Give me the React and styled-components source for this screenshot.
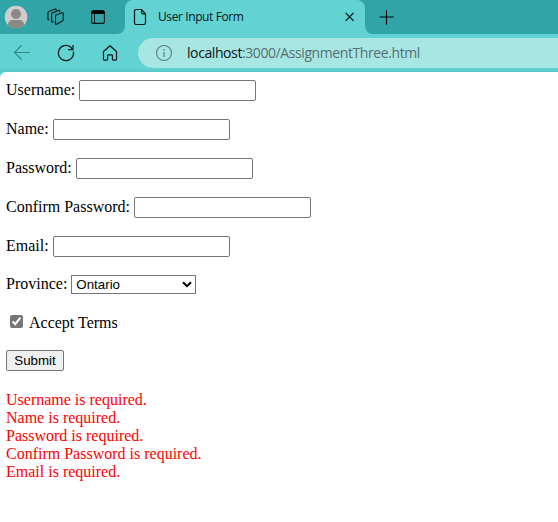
import React, { useState } from "react";
import styled, { createGlobalStyle } from "styled-components";

const GlobalStyle = createGlobalStyle`
  * { box-sizing: border-box; }
  body { margin: 0; background: #fff; overflow: hidden; }
`;

const Browser = styled.div`
  display: flex;
  flex-direction: column;
  height: 522px;
  overflow: hidden;
  background: #62d2d2;
`;

const TabStrip = styled.div`
  display: flex;
  height: 34px;
  flex: none;
  background: #62d2d2;
`;

const StripSection = styled.div`
  display: flex;
  align-items: center;
  background: #31a4a8;
  height: 34px;
`;

const StartSection = styled(StripSection)`
  width: 125px;
  padding-left: 4px;
  border-bottom-right-radius: 8px;
  svg { flex: none; }
`;

const EndSection = styled(StripSection)`
  flex: 1;
  padding-left: 14px;
  border-bottom-left-radius: 8px;
`;

const TabFrame = styled.div`
  width: 240px;
  /* only the upper half shows the strip colour behind the rounded corners */
  background: linear-gradient(#31a4a8 17px, #62d2d2 17px);
`;

const Tab = styled.div`
  display: flex;
  align-items: center;
  height: 34px;
  padding: 0 9px 0 8px;
  background: #62d2d2;
  border-radius: 8px 8px 0 0;
`;

const TabTitle = styled.span`
  flex: 1;
  margin-left: 10px;
  font: 12px/16px "Open Sans", "Noto Sans", sans-serif;
  letter-spacing: -0.4px;
  color: #06191a;
  white-space: nowrap;
`;

const Toolbar = styled.div`
  display: flex;
  align-items: center;
  height: 38px;
  flex: none;
  padding-left: 12px;
  background: linear-gradient(#62d2d2 34px, #59c7c8 38px);
`;

const NavIcons = styled.div`
  display: flex;
  align-items: center;
  gap: 24px;
  width: 126px;
  svg { flex: none; }
`;

const AddressBar = styled.div`
  display: flex;
  align-items: center;
  flex: 1;
  height: 30px;
  padding-left: 17px;
  background: #a8e6e4;
  border-radius: 15px 0 0 15px;
`;

const Url = styled.span`
  margin-left: 14px;
  font: 14px/20px "Open Sans", "Noto Sans", sans-serif;
  letter-spacing: -0.41px;
  color: #576f70;
  white-space: nowrap;
`;

const Host = styled.span`
  color: #061718;
`;

const Page = styled.main`
  flex: 1;
  padding: 8px 6px;
  background: #fff;
  border-top-left-radius: 6px;
  font: 16px/17px "Liberation Serif", "Times New Roman", serif;
  color: #000;
`;

const Field = styled.label`
  display: flex;
  align-items: baseline;
  gap: 4px;
  height: 21px;
  margin-bottom: 18px;
  white-space: nowrap;
`;

const SelectField = styled(Field)`
  height: 19px;
`;

const TextInput = styled.input`
  width: 177px;
  height: 21px;
  margin: 0;
  padding: 1px 2px;
  border: 1px solid #767676;
  border-radius: 2px;
  background: #fff;
  font: 13.333px "Liberation Sans", Arial, sans-serif;
  outline: none;
`;

const SelectWrap = styled.span`
  display: grid;
  width: 125px;
  height: 19px;
  & > * { grid-area: 1 / 1; }
  svg { justify-self: end; align-self: center; margin-right: 4px; pointer-events: none; }
`;

const Select = styled.select`
  appearance: none;
  width: 125px;
  height: 19px;
  margin: 0;
  padding: 0 4px;
  border: 1px solid #767676;
  border-radius: 0;
  background: #fff;
  color: #000;
  font: 13.333px/17px "Liberation Sans", Arial, sans-serif;
`;

const Terms = styled.label`
  display: flex;
  align-items: baseline;
  gap: 6px;
  height: 18px;
  margin: 20px 0 18px 4px;
`;

const Checkbox = styled.input`
  width: 13px;
  height: 13px;
  margin: 0;
  accent-color: #767676;
`;

const Submit = styled.button`
  display: block;
  width: 58px;
  height: 21px;
  padding: 0;
  border: 1px solid #767676;
  border-radius: 2px;
  background: #efefef;
  color: #000;
  font: 13.333px/17px "Liberation Sans", Arial, sans-serif;
`;

const Errors = styled.div`
  display: grid;
  row-gap: 1px;
  margin-top: 20px;
  color: #f00;
`;

const AvatarIcon = () => (
  <svg width="24" height="24" viewBox="0 0 24 24">
    <circle cx="12" cy="12" r="11.3" fill="#cfcdcb" />
    <circle cx="12" cy="9" r="5" fill="#8b8884" />
    <path d="M4 20c0-3.5 2-5 5-5h6c3 0 5 1.5 5 5a11.3 11.3 0 0 1-16 0Z" fill="#8b8884" />
  </svg>
);

const WorkspacesIcon = styled(({ className }) => (
  <svg className={className} width="18" height="18" viewBox="0 0 18 18" fill="none" stroke="#06191a" strokeWidth="1.1" strokeLinejoin="round" strokeLinecap="round">
    <path d="M8.5 7.2 15 4.8q1.2-.4 1.2.8v6.2q0 .9-.8 1.2l-5.8 3.2q-1.1.5-1.1-.7Z" />
    <path d="M12.7 3.6V2.9q0-.9-1-.6L5.4 4.9q-.8.3-.8 1.2v7q0 1.1 1 .9l.8-.3" />
    <path d="M9.1 1.9V1.6q0-.9-1-.6L1.8 3.4Q1 3.7 1 4.6v6.3q0 1 .9.9" />
  </svg>
))`margin-left: 19px;`;

const TabActionsIcon = styled(({ className }) => (
  <svg className={className} width="14" height="14" viewBox="0 0 14 14">
    <rect x=".6" y=".6" width="12.8" height="12.8" rx="2" fill="none" stroke="#06191a" strokeWidth="1.1" />
    <path d="M.5 4V2.5Q.5.5 2.5.5h9q2 0 2 2V4Z" fill="#000" />
    <path d="M3.5 4v9" stroke="#06191a" strokeWidth="1" />
  </svg>
))`margin-left: 26px;`;

const FileIcon = () => (
  <svg width="15" height="18" viewBox="0 0 15 18" fill="none" stroke="#06191a" strokeWidth="1.2" strokeLinejoin="round">
    <path d="M3 1.5h5.5l4 4.3v9q0 1.7-1.7 1.7H3q-1.5 0-1.5-1.7V3.2Q1.5 1.5 3 1.5ZM8.5 1.5v3q0 1.3 1.3 1.3h2.7" />
  </svg>
);

const CloseIcon = () => (
  <svg width="12" height="12" viewBox="0 0 12 12" stroke="#06191a" strokeWidth="1.3">
    <path d="m1.6 1.9 8 8M9.6 1.9l-8 8" />
  </svg>
);

const PlusIcon = () => (
  <svg width="15" height="15" viewBox="0 0 15 15" stroke="#000" strokeWidth="1.1">
    <path d="M7.5.5v14M.5 7h14" />
  </svg>
);

const BackIcon = () => (
  <svg width="20" height="18" viewBox="0 0 20 18" fill="none" stroke="#34888a" strokeWidth="1.1">
    <path d="M18 8.5H2.5M9.5 1.5l-7 7 7 7" />
  </svg>
);

const ReloadIcon = () => (
  <svg width="20" height="20" viewBox="0 0 20 20" fill="none" stroke="#06191a" strokeWidth="1.2">
    <path d="M17.4 8.5A7.6 7.6 0 1 1 14.6 4l2 2.4M17 2v4.7h-4.8" />
  </svg>
);

const HomeIcon = () => (
  <svg width="20" height="20" viewBox="0 0 20 20" fill="none" stroke="#06191a" strokeWidth="1.2" strokeLinejoin="round">
    <path d="M3.5 8.5 10 2.7l6.5 5.8v7.8q0 .8-.8.8h-2.5q-.8 0-.8-.8v-3.8q0-.7-.7-.7H8.3q-.7 0-.7.7v3.8q0 .8-.8.8H4.3q-.8 0-.8-.8Z" />
  </svg>
);

const InfoIcon = () => (
  <svg width="18" height="18" viewBox="0 0 18 18" fill="none" stroke="#607e7f" strokeWidth="1.1">
    <circle cx="9" cy="9" r="7.5" />
    <path d="M9 8v5M9 5v1.5" strokeWidth="1.3" />
  </svg>
);

const ChevronIcon = () => (
  <svg width="10" height="7" viewBox="0 0 10 7" fill="none" stroke="#000" strokeWidth="2">
    <path d="m1 1.2 4 4 4-4" />
  </svg>
);

const fields = [
  { label: "Username", type: "text" },
  { label: "Name", type: "text" },
  { label: "Password", type: "password" },
  { label: "Confirm Password", type: "password" },
  { label: "Email", type: "text" },
];

export default function App() {
  const [accepted, setAccepted] = useState(true);
  return (
    <Browser>
      <GlobalStyle />
      <TabStrip>
        <StartSection>
          <AvatarIcon />
          <WorkspacesIcon />
          <TabActionsIcon />
        </StartSection>
        <TabFrame>
          <Tab>
            <FileIcon />
            <TabTitle>User Input Form</TabTitle>
            <CloseIcon />
          </Tab>
        </TabFrame>
        <EndSection>
          <PlusIcon />
        </EndSection>
      </TabStrip>
      <Toolbar>
        <NavIcons>
          <BackIcon />
          <ReloadIcon />
          <HomeIcon />
        </NavIcons>
        <AddressBar>
          <InfoIcon />
          <Url><Host>localhost</Host>:3000/AssignmentThree.html</Url>
        </AddressBar>
      </Toolbar>
      <Page>
        {fields.map(({ label, type }) => (
          <Field key={label}>
            {label}:
            <TextInput type={type} />
          </Field>
        ))}
        <SelectField>
          Province:
          <SelectWrap>
            <Select defaultValue="Ontario">
              <option>Ontario</option>
            </Select>
            <ChevronIcon />
          </SelectWrap>
        </SelectField>
        <Terms>
          <Checkbox type="checkbox" checked={accepted} onChange={(e) => setAccepted(e.target.checked)} />
          Accept Terms
        </Terms>
        <Submit type="button">Submit</Submit>
        <Errors>
          {fields.map(({ label }) => (
            <div key={label}>{label} is required.</div>
          ))}
        </Errors>
      </Page>
    </Browser>
  );
}
